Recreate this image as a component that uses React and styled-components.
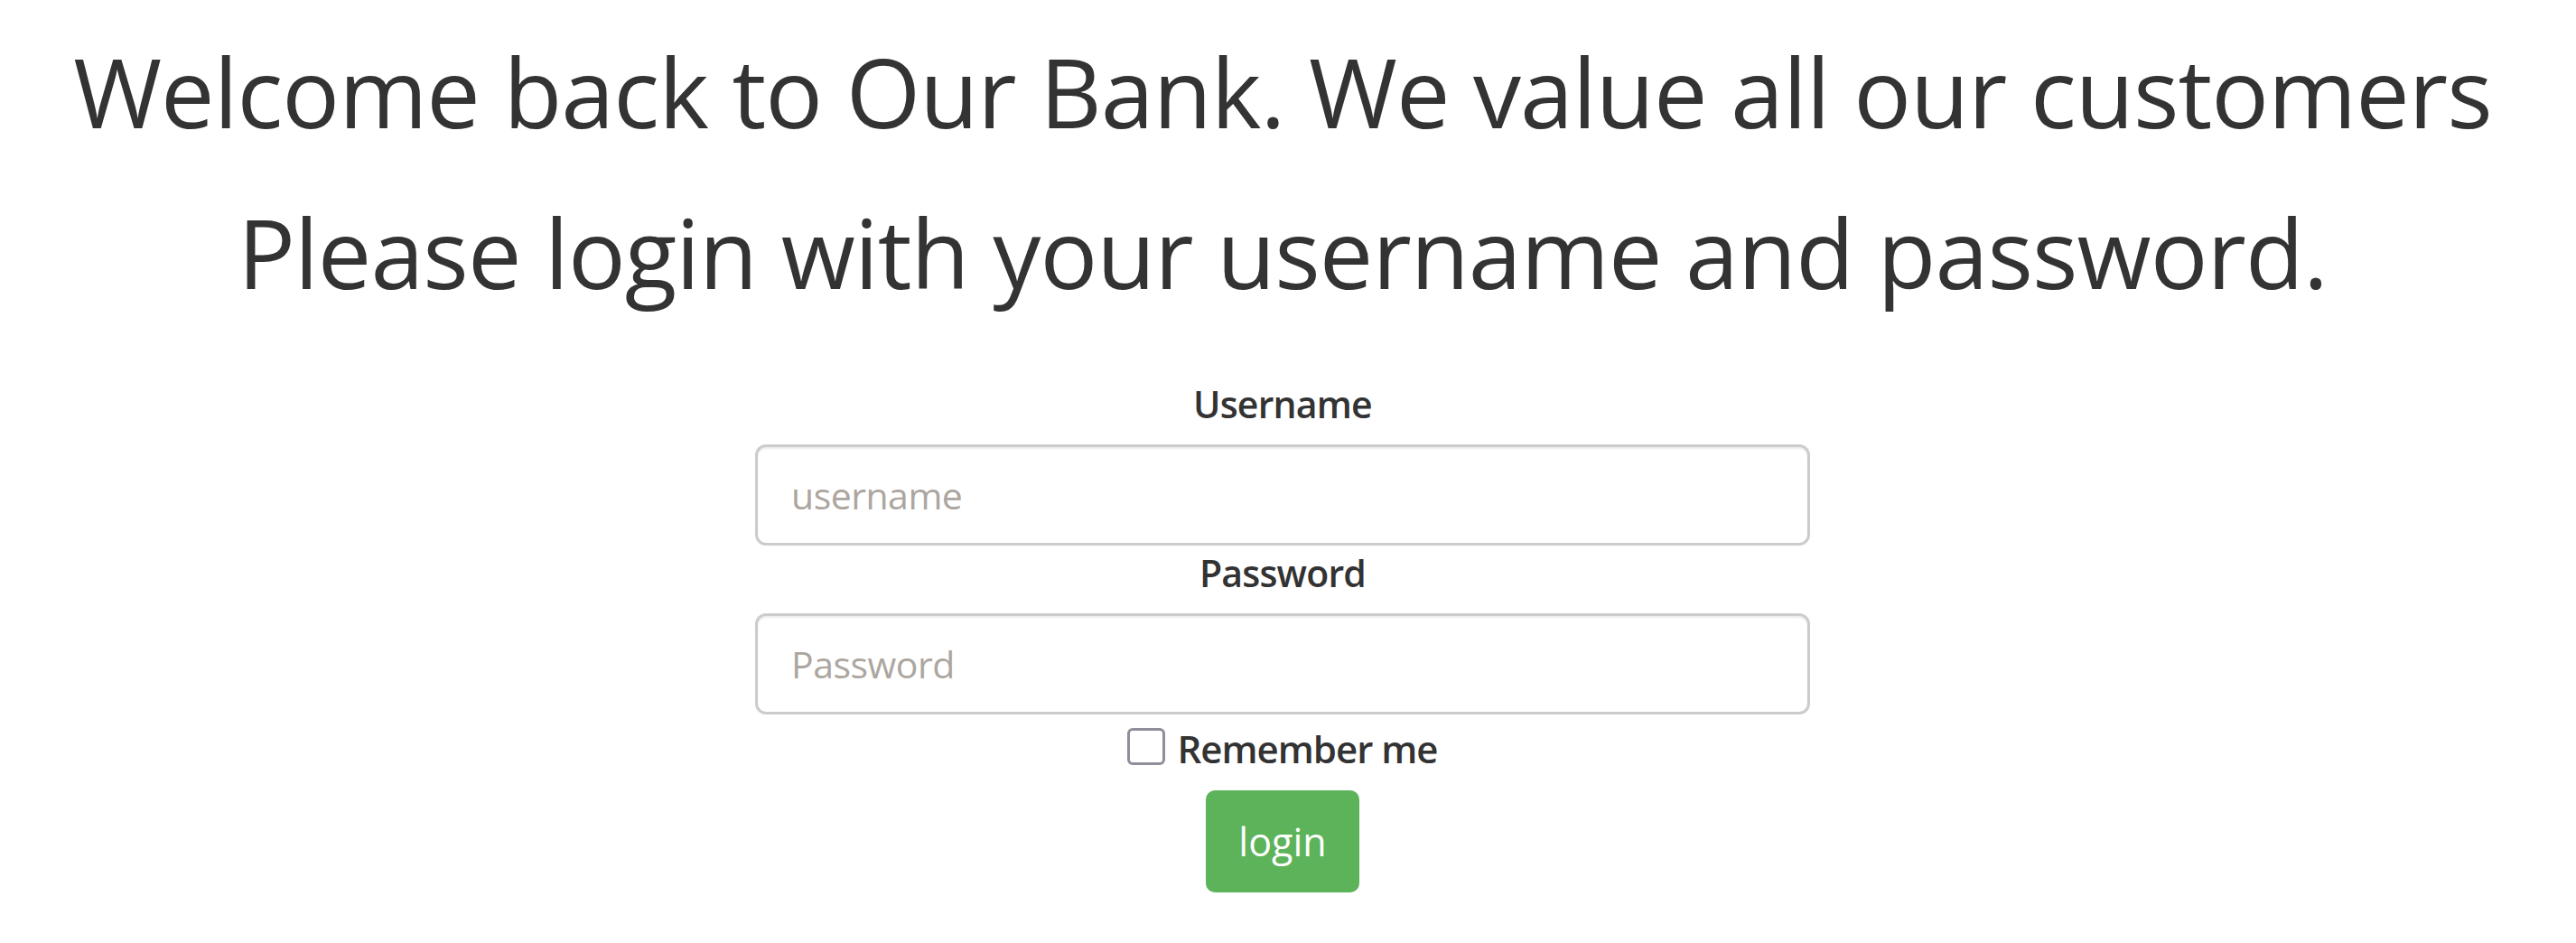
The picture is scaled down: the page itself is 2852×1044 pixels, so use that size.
import React from 'react';
import styled, { createGlobalStyle } from 'styled-components';

const GlobalStyle = createGlobalStyle`
body{margin:0;background:#fff;color:#333;font-family:"Open Sans","Noto Sans",sans-serif;}
*{box-sizing:border-box;}
`;

export default function App(){
	return(
		<Page>
			<GlobalStyle/>
			<Title>Welcome back to Our Bank. We value all our customers</Title>
			<Title>Please login with your username and password.</Title>
			<LoginForm onSubmit={e => e.preventDefault()}>
				<Label htmlFor="username">Username</Label>
				<Input id="username" type="text" placeholder="username"/>
				<Label htmlFor="password">Password</Label>
				<Input id="password" type="password" placeholder="Password"/>
				<RememberRow>
					<Check type="checkbox"/>
					<span>Remember me</span>
				</RememberRow>
				<LoginButton type="submit">login</LoginButton>
			</LoginForm>
		</Page>
	);
}

const Page = styled.div`
padding:12px 12px 40px 0;
text-align:center;
`

const Title = styled.h1`
margin:0;
font-size:106px;
font-weight:400;
letter-spacing:-0.95px;
line-height:178px;
color:#333;
white-space:nowrap;
`

const LoginForm = styled.form`
display:flex;
flex-direction:column;
align-items:center;
margin-top:49px;
`

const Label = styled.label`
font-size:41px;
font-weight:600;
letter-spacing:-0.8px;
line-height:60px;
margin-bottom:15px;
color:#333;
`

const Input = styled.input`
width:1168px;
height:112px;
padding:0 37px;
border:3px solid #ccc;
border-radius:12px;
box-shadow:inset 0 2px 2px rgba(0,0,0,.075);
font-family:inherit;
font-size:41px;
letter-spacing:-0.5px;
color:#555;
outline:none;
&::placeholder{color:#aca69f;}
`

const RememberRow = styled.label`
display:flex;
align-items:center;
justify-content:center;
gap:13px;
margin-top:15px;
height:41px;
font-size:42px;
font-weight:600;
letter-spacing:-1px;
line-height:41px;
color:#333;
span{padding-top:4px;}
`

const Check = styled.input`
appearance:none;
margin:0;
width:42px;
height:41px;
border:3px solid #8f8e9b;
border-radius:6px;
background:#fff;
`

const LoginButton = styled.button`
margin-top:28px;
height:113px;
padding:0 36px;
border:none;
border-radius:10px;
background:#5cb35a;
color:#fff;
font-family:inherit;
font-size:43px;
cursor:pointer;
`
